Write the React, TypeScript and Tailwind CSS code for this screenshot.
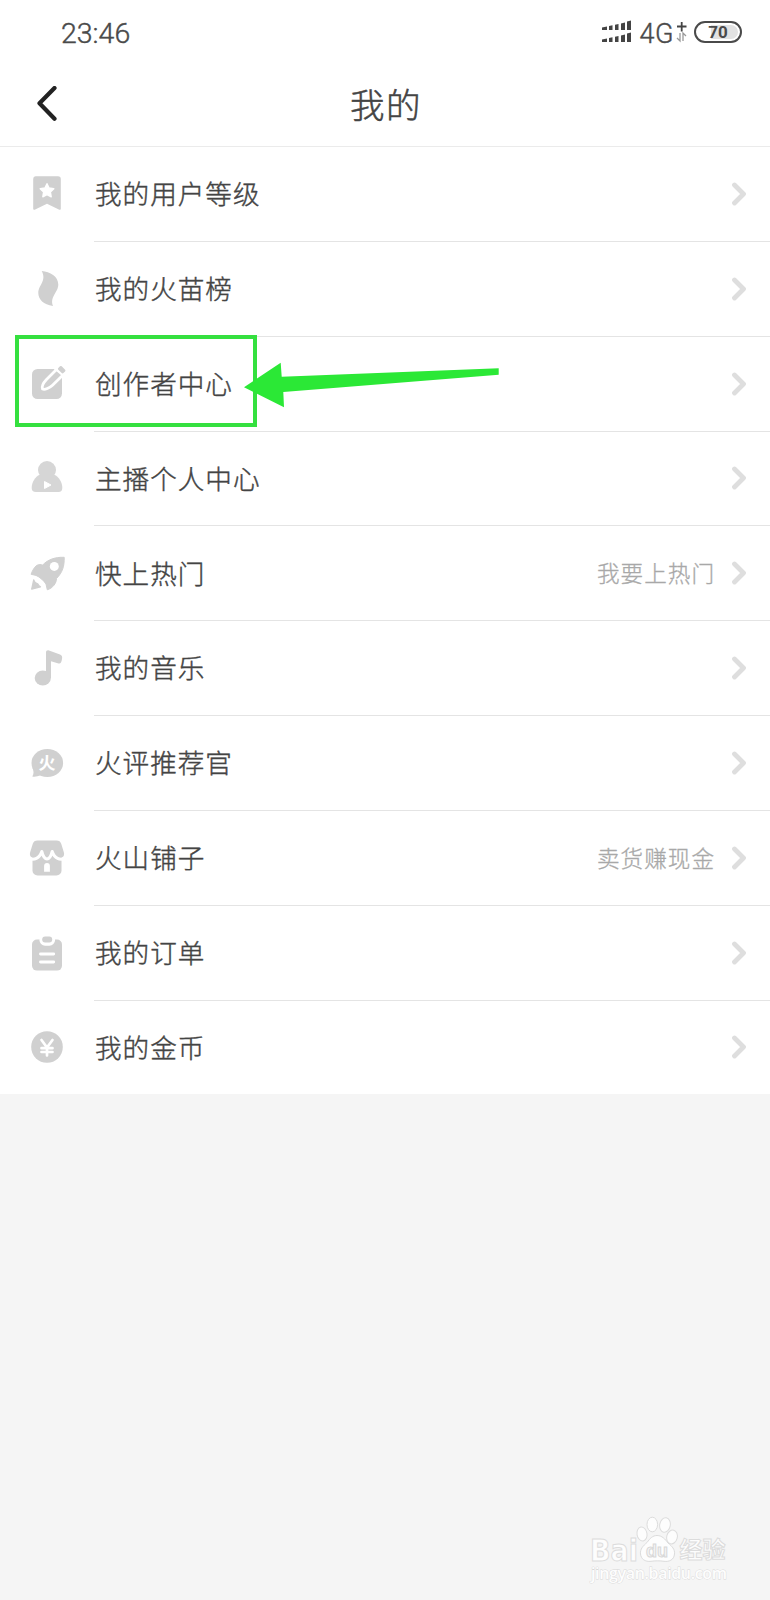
import React from "react";

const icons = {
  level: (
    <>
      <path d="M-11.5-17.7H11a2.8 2.8 0 0 1 2.8 2.8V14.8a1 1 0 0 1-1.5.9L0 9.8-12.3 15.7a1 1 0 0 1-1.5-.9V-15a2.7 2.7 0 0 1 2.3-2.7Z" />
      <path
        d="M0-10.3 2.1-6 6.8-5.3 3.4-1.9 4.2 2.8 0 .6-4.2 2.8-3.4-1.9-6.8-5.3-2.1-6Z"
        fill="#fff"
        stroke="#fff"
        strokeWidth="1.4"
        strokeLinejoin="round"
      />
    </>
  ),
  flame: (
    <path d="M-5.3-18C3-17.5 11.3-12.5 11.3-4.5C11.3 3.5 2.5 7.5 6 17C-3.5 15.5-8.7 10.5-8.7 4C-8.7-4 0-8-5.3-18Z" />
  ),
  create: (
    <>
      <rect x="-15" y="-15" width="30" height="30" rx="5.5" />
      <path d="M6-16 16-5 26-16 17-25Z" fill="#fff" />
      <path
        d="M9.5-14.5-.5-4.5C-3.8-1-5.5 2.5-4.5 5C-2 6 2.5 4 5.5 1.2L16-9Z"
        stroke="#fff"
        strokeWidth="2.8"
        strokeLinejoin="round"
      />
      <rect x="-3.6" y="-2.4" width="7.2" height="4.8" rx="1.2" transform="translate(14.7 -14.3) rotate(45)" />
    </>
  ),
  anchor: (
    <g fill="#d6d6d6">
      <circle cx="0" cy="-8" r="9" />
      <path d="M-7-3.5C-12-1-15.3 4-15.3 10C-15.3 12.8-14 14-11 14H11.5C14 14 15.3 12.8 15.3 10C15.3 4 12-1 7-3.5Z" />
      <path d="M-2.5 3.5V10.5L4 7Z" fill="#fff" stroke="#fff" strokeLinejoin="round" />
    </g>
  ),
  rocket: (
    <>
      <path
        d="M17.2-15.7C17.5-7 15.5-.5 9.5 5.5C9.5 10 6 15 .3 16.8L-1 11C-3 8-7 4-11 2.4L-15.9 1.3C-14.5-3-12.5-5.5-10.5-7.5C-8-8.8-6-8.5-4.3-8C1-13.5 8-16 17.2-15.7Z"
        strokeWidth="1"
        stroke="#d0d0d0"
        strokeLinejoin="round"
      />
      <circle cx="7.3" cy="-6.6" r="4.5" fill="#fff" />
      <path
        d="M-13.3 6.8C-12.8 9-11.5 10.2-9.3 10.8C-8.5 12.3-7.5 13.3-6.5 13.8L-15.3 16.2Z"
        stroke="#d0d0d0"
        strokeWidth="1.3"
        strokeLinejoin="round"
      />
    </>
  ),
  music: (
    <>
      <ellipse cx="-4.2" cy="10" rx="8.1" ry="7.5" />
      <path d="M-1 10V-15.5C-1-17.5.5-18.2 2-17.6L13-13.5C15-12.7 15.5-11 15-9C14.4-5.5 13.5-4 11.5-4.6L4-6.8V10Z" />
    </>
  ),
  comment: (
    <>
      <ellipse cx=".3" cy="0" rx="15.8" ry="14" />
      <path d="M-15 4C-13 8-13 11-14.7 13.5C-12 14-9.5 13.5-6 12Z" />
      <text
        x="0"
        y="5.5"
        textAnchor="middle"
        fill="#fff"
        fontSize="17"
        fontWeight="700"
        fontFamily="'Noto Sans CJK SC', sans-serif"
      >
        火
      </text>
    </>
  ),
  shop: (
    <>
      <path d="M-14.5-5H14.5V12.4a5 5 0 0 1-5 5H-9.5a5 5 0 0 1-5-5Z" />
      <path d="M-9.5-17.6H9.5C12-17.6 13.5-16.5 14.3-14L16.9-5.5C18-1 14.5.5 11-.5H-11C-14.5.5-18-1-16.9-5.5L-14.3-14C-13.5-16.5-12-17.6-9.5-17.6Z" />
      <path
        d="M-18 .3C-13 2.5-7.5.5-5.2-6.5C-3.5 0-1.5 1 0 1C1.5 1 3.5 0 5.2-6.5C7.5.5 13 2.5 18 .3"
        fill="none"
        stroke="#fff"
        strokeWidth="3"
        strokeLinejoin="round"
      />
      <path d="M-2.9 13.7V8A2.9 2.9 0 0 1 2.9 8V13.7Z" fill="#fff" />
    </>
  ),
  order: (
    <>
      <rect x="-15" y="-13.4" width="30" height="31" rx="5" />
      <rect x="-7.5" y="-19" width="15.5" height="11.7" rx="5.5" fill="#fff" />
      <rect x="-4.8" y="-16.4" width="10" height="5.8" rx="2.9" />
      <path d="M-6.5 1H6.7M-6.5 9H6.7" stroke="#fff" strokeWidth="2.9" strokeLinecap="round" />
    </>
  ),
  coin: (
    <>
      <circle cx="0" cy="0" r="15.8" />
      <path
        d="M-5.5-7 0 .5 5.5-7M0 .5V8.5M-5.5 1.2H5.5M-5.5 5H5.5"
        fill="none"
        stroke="#fff"
        strokeWidth="2.7"
        strokeLinecap="round"
      />
    </>
  ),
};

const items: { icon: keyof typeof icons; label: string; hint?: string }[] = [
  { icon: "level", label: "我的用户等级" },
  { icon: "flame", label: "我的火苗榜" },
  { icon: "create", label: "创作者中心" },
  { icon: "anchor", label: "主播个人中心" },
  { icon: "rocket", label: "快上热门", hint: "我要上热门" },
  { icon: "music", label: "我的音乐" },
  { icon: "comment", label: "火评推荐官" },
  { icon: "shop", label: "火山铺子", hint: "卖货赚现金" },
  { icon: "order", label: "我的订单" },
  { icon: "coin", label: "我的金币" },
];

const StatusBar = () => (
  <div className="flex h-16 items-center justify-between pl-[61px] pr-7 font-[Roboto,sans-serif] text-[#4a4a4a]">
    <div className="mt-1 text-[28.5px] font-light [-webkit-text-stroke:0.4px]">
      23:46
    </div>
    <div className="flex items-center">
      <svg width="31" height="24" viewBox="0 0 31 24" fill="#444">
        <path d="M1 10V7.5L6 6.5V10ZM8 10V6L11.5 5.3V10ZM14 10V4.8L17.5 4V10ZM20 10V3.5L24 2.5V10ZM26 10V1.5L30 .5V10Z" />
        <path d="M1 22V19.5L6 18.5V22ZM8 22V18L11.5 17.3V22ZM14 22V16.8L17.5 16V22ZM20 22V15.5L24 14.5V22ZM26 22V13.5L30 12.5V22Z" />
      </svg>
      <div className="ml-2 mt-1 text-[27px] font-light leading-none tracking-[0.5px] [-webkit-text-stroke:0.4px]">
        4G
      </div>
      <svg className="ml-0.5" width="12" height="24" viewBox="0 0 12 24" fill="none">
        <path d="M1 6.5H10.5M5.7 2V11.5" stroke="#444" strokeWidth="1.8" />
        <path d="M4 13V21L1 18M7 21V13L10 16" stroke="#999" strokeWidth="1.3" />
      </svg>
      <div className="ml-1.5 flex h-[22px] w-12 items-center justify-center rounded-full border-2 border-[#4a4a4a] bg-linear-to-r from-white from-35% to-[#e2e2e2] to-35% text-[17px] font-bold leading-none shadow-[inset_0_0_0_2px_white]">
        70
      </div>
    </div>
  </div>
);

const Watermark = () => (
  <svg
    className="absolute bottom-0 right-0"
    width="200"
    height="100"
    viewBox="0 0 200 100"
    fill="#fdfdfd"
    stroke="#dcdcdc"
    strokeWidth="1"
  >
    <text
      x="20"
      y="60.5"
      fontSize="30"
      fontWeight="700"
      textLength="48"
      lengthAdjust="spacingAndGlyphs"
      fontFamily="'DejaVu Sans', sans-serif"
    >
      Bai
    </text>
    <path d="M87 35.5C92 35.5 95 39 98 43C102 46.5 105 49 104.5 54C104 60 99 62 94 61.3C90 60.7 85 60.7 81 61.3C75 62 71 59 70.5 54C70 49 73 46 77 42.5C80 38.5 82.5 35.5 87 35.5Z" />
    <ellipse cx="72" cy="34" rx="5" ry="7" transform="rotate(-10 72 34)" />
    <ellipse cx="82.3" cy="24.5" rx="5.3" ry="7.3" />
    <ellipse cx="95" cy="25" rx="5.3" ry="7.3" transform="rotate(10 95 25)" />
    <ellipse cx="102" cy="37" rx="5.3" ry="7" transform="rotate(15 102 37)" />
    <text
      x="76"
      y="56.5"
      fontSize="18"
      fill="#f4f4f4"
      stroke="#d8d8d8"
      fontWeight="700"
      fontFamily="'Liberation Sans', sans-serif"
    >
      du
    </text>
    <text
      x="109.5"
      y="58"
      fontSize="23"
      fontWeight="700"
      fontFamily="'Noto Sans CJK SC', sans-serif"
    >
      经验
    </text>
    <text
      x="21"
      y="78.5"
      fontSize="16"
      fontWeight="600"
      stroke="#d8d8d8"
      strokeWidth=".8"
      paintOrder="stroke"
      textLength="136"
      fontFamily="'Open Sans', sans-serif"
    >
      jingyan.baidu.com
    </text>
  </svg>
);

const App = () => {
  return (
    <div className="relative h-[1600px] w-[770px] overflow-hidden bg-[#f5f5f5] font-['Noto_Sans_CJK_SC',sans-serif] text-[#444]">
      <div className="bg-white">
        <StatusBar />
        <div className="flex h-[83px] items-center border-b border-[#ebebeb] px-9">
          <svg width="22" height="38" viewBox="0 0 22 38" fill="none">
            <path
              d="M18.5 2 3.5 17.3 18.5 32.8"
              stroke="#222"
              strokeWidth="4.2"
              strokeLinecap="round"
              strokeLinejoin="round"
            />
          </svg>
          <h1 className="-mt-1 flex-1 pl-0.5 text-center text-[34.5px] font-light leading-none tracking-[1.6px] [-webkit-text-stroke:0.5px]">
            我的
          </h1>
          <div className="w-[22px]" />
        </div>

        <div className="flex flex-col">
          {items.map((item) => (
            <div
              key={item.label}
              className={`flex items-center pl-[29px] ${item.icon === "coin" ? "h-[93.5px]" : "h-[94.85px]"}`}
            >
              <svg
                className="-mt-px shrink-0 overflow-visible"
                width="36"
                height="36"
                viewBox="-18 -18 36 36"
                fill="#d0d0d0"
              >
                {icons[item.icon]}
              </svg>
              <div
                className={`ml-[29px] flex flex-1 items-center self-stretch pr-[23px] ${item.icon === "coin" ? "" : "border-b border-[#e4e4e4]"}`}
              >
                <div className="-mt-px flex-1 pl-px text-[26.6px] font-light leading-none tracking-[1px] [-webkit-text-stroke:0.4px]">
                  {item.label}
                </div>
                {item.hint && (
                  <div className="mr-4 text-[22.6px] font-light leading-none tracking-[1px] text-[#a8a8a8] [-webkit-text-stroke:0.3px]">
                    {item.hint}
                  </div>
                )}
                <svg width="16" height="24" viewBox="0 0 16 24" fill="none">
                  <path
                    d="M3.5 3 12.5 12 3.5 21"
                    stroke="#dedede"
                    strokeWidth="4.8"
                    strokeLinecap="round"
                    strokeLinejoin="round"
                  />
                </svg>
              </div>
            </div>
          ))}
        </div>
      </div>

      {/* highlight box and arrow drawn over the list */}
      <div className="absolute left-[15px] top-[335px] h-[92px] w-[242px] border-4 border-[#35e03f]" />
      <svg
        className="absolute left-[240px] top-[355px]"
        width="264"
        height="60"
        viewBox="240 355 264 60"
        fill="#2be836"
      >
        <path d="M244 387.3 280.7 362.7 281.7 376.7 498.7 368.3V374.7L283.3 392 284 407.3Z" />
      </svg>

      <Watermark />
    </div>
  );
};

export default App;
